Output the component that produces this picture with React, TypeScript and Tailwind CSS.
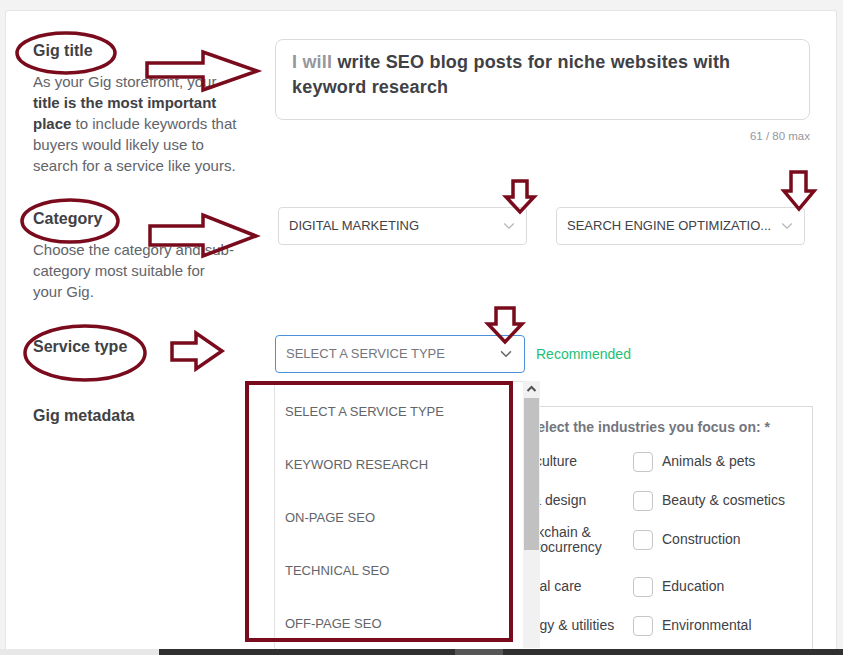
import { ChevronDown } from 'lucide-react'

const serviceTypes = ['Select a service type', 'Keyword research', 'On-page SEO', 'Technical SEO', 'Off-page SEO']

const industries = [
  { left: 'Agriculture', right: 'Animals & pets', extra: '' },
  { left: 'Art & design', right: 'Beauty & cosmetics', extra: '' },
  { left: 'Blockchain & cryptocurrency', right: 'Construction', extra: 'mb-[8px]' },
  { left: 'Dental care', right: 'Education', extra: '' },
  { left: 'Energy & utilities', right: 'Environmental', extra: '' },
]

function Label({ children }: { children: React.ReactNode }) {
  return <h3 className="text-[16px] leading-[22px] font-bold text-[#404145]">{children}</h3>
}

function Checkbox() {
  return <span className="w-[20px] h-[20px] shrink-0 rounded-[4px] border border-[#c5c6c9] bg-white" />
}

function Annotations() {
  // red marker drawn over the screenshot
  return (
    <svg
      className="pointer-events-none absolute inset-0"
      width={843}
      height={655}
      viewBox="0 0 843 655"
      fill="none"
      stroke="#7a0b1d"
      strokeWidth={3.5}
    >
      <ellipse cx={66} cy={53} rx={49} ry={20} />
      <ellipse cx={70} cy={221} rx={48} ry={21} />
      <ellipse cx={85} cy={353} rx={60} ry={27} />
      <polygon points="147,63 203,63 203,52 257,71 203,90 203,77 147,77" />
      <polygon points="150,226 203,226 203,215 256,236 203,256 203,245 150,245" />
      <polygon points="172,343 196,343 196,333 222,351 196,369 196,360 172,360" />
      <polygon points="513,181 527,181 527,197 534,197 520,212 506,197 513,197" />
      <polygon points="791,172 806,172 806,191 814,191 799,209 784,191 791,191" />
      <polygon points="496,308 514,308 514,324 522,324 505,342 488,324 496,324" />
      <rect x={247} y={383} width={264} height={257} strokeWidth={4} />
    </svg>
  )
}

export default function App() {
  return (
    <div className="relative w-[843px] h-[655px] overflow-hidden flex flex-col bg-[#f3f3f3] font-['Liberation_Sans',Arial,sans-serif]">
      <div className="flex-1 min-h-0 pt-[10px] pl-[5px] pr-[6px]">
        <div className="h-full overflow-hidden bg-white border border-b-0 border-[#e4e5e7] rounded-t-[3px] pt-[29px] pl-[27px] pr-[23px]">
          <div className="grid grid-cols-[222px_1fr] gap-x-[20px] gap-y-[32px]">
            {/* Gig title */}
            <div>
              <Label>Gig title</Label>
              <p className="mt-[9px] text-[15px] leading-[21px] text-[#62646a]">
                As your Gig storefront, your
                <br />
                <b className="text-[#404145]">title is the most important</b>
                <br />
                <b className="text-[#404145]">place</b> to include keywords that
                <br />
                buyers would likely use to
                <br />
                search for a service like yours.
              </p>
            </div>
            <div className="-mt-[1px]">
              <div className="w-[535px] h-[81px] rounded-[8px] border border-[#dadbdd] px-[16px] pt-[10px] text-[18px] leading-[25px] font-bold tracking-[0.2px] text-[#404145]">
                <span className="text-[#95979d]">I will</span> write SEO blog posts for niche websites with keyword research
              </div>
              <div className="w-[535px] mt-[9px] text-right text-[11.5px] leading-[14px] text-[#95979d]">61 / 80 max</div>
            </div>

            {/* Category */}
            <div>
              <Label>Category</Label>
              <p className="mt-[9px] text-[15px] leading-[21px] text-[#62646a]">
                Choose the category and sub-
                <br />
                category most suitable for
                <br />
                your Gig.
              </p>
            </div>
            <div className="-mt-[1px] pl-[3px] flex gap-[29px]">
              <div className="w-[249px] h-[38px] rounded-[4px] border border-[#dadbdd] pl-[10px] pr-[8px] flex items-center justify-between text-[13px] text-[#404145]">
                <span>DIGITAL MARKETING</span>
                <ChevronDown size={18} strokeWidth={1.5} className="text-[#b5b6ba]" />
              </div>
              <div className="w-[249px] h-[38px] rounded-[4px] border border-[#dadbdd] pl-[10px] pr-[8px] flex items-center justify-between text-[13px] text-[#404145]">
                <span className="whitespace-nowrap">SEARCH ENGINE OPTIMIZATIO...</span>
                <ChevronDown size={18} strokeWidth={1.5} className="text-[#b5b6ba]" />
              </div>
            </div>

            {/* Service type */}
            <div className="mt-[2px]">
              <Label>Service type</Label>
            </div>
            <div className="mt-[1px] flex items-center gap-[11px]">
              <div className="relative w-[250px] h-[38px] rounded-[4px] border-[1.5px] border-[#4a8fd8] pl-[10px] pr-[9px] flex items-center justify-between text-[13px] text-[#74767e]">
                <span>SELECT A SERVICE TYPE</span>
                <ChevronDown size={18} strokeWidth={2} className="text-[#62646a]" />
                {/* open native list */}
                <div className="absolute left-[-2px] top-[45px] w-[266px] h-[267px] flex">
                  <ul className="w-[249px] h-full bg-white border-l border-t border-[#e2e2e2] pt-[3px]">
                    {serviceTypes.map((s) => (
                      <li key={s} className="h-[53px] flex items-center pl-[10px] text-[13px] uppercase text-[#62646a]">
                        {s}
                      </li>
                    ))}
                  </ul>
                  <div className="w-[17px] h-full bg-[#f1f1f1] flex flex-col">
                    <div className="h-[17px] flex items-center justify-center">
                      <svg width="17" height="17" viewBox="0 0 17 17" fill="none" stroke="#505050" strokeWidth={2}>
                        <polyline points="4.5,10 8.5,6 12.5,10" />
                      </svg>
                    </div>
                    <div className="mx-[1px] h-[152px] bg-[#c1c1c1]" />
                  </div>
                </div>
              </div>
              <span className="text-[14px] text-[#1dbf73]">Recommended</span>
            </div>

            {/* Gig metadata */}
            <div>
              <Label>Gig metadata</Label>
            </div>
            <div className="mt-[1px] h-[300px] border border-[#dadbdd] flex">
              <div className="w-[195px] shrink-0" />
              <div className="flex-1 pt-[10px] pl-[10px]">
                <h4 className="ml-[47px] text-[14px] leading-[20px] font-bold text-[#74767e]">
                  Select the industries you focus on: *
                </h4>
                <div className="mt-[5px]">
                  {industries.map((row) => (
                    <div key={row.left} className={`h-[39px] grid grid-cols-[152px_1fr] items-center ${row.extra}`}>
                      <div className="flex items-center gap-[9px]">
                        <Checkbox />
                        <span className="w-[112px] text-[14px] leading-[15px] text-[#404145]">{row.left}</span>
                      </div>
                      <div className="flex items-center gap-[9px]">
                        <Checkbox />
                        <span className="text-[14px] leading-[15px] text-[#404145]">{row.right}</span>
                      </div>
                    </div>
                  ))}
                </div>
              </div>
            </div>
          </div>
        </div>
      </div>
      <div className="h-[6px] flex shrink-0">
        <div className="w-[159px] bg-[#e8e8e8]" />
        <div className="flex-1 bg-[#303030] pl-[296px]">
          <div className="w-[48px] h-full bg-[#565656]" />
        </div>
      </div>
      <Annotations />
    </div>
  )
}
